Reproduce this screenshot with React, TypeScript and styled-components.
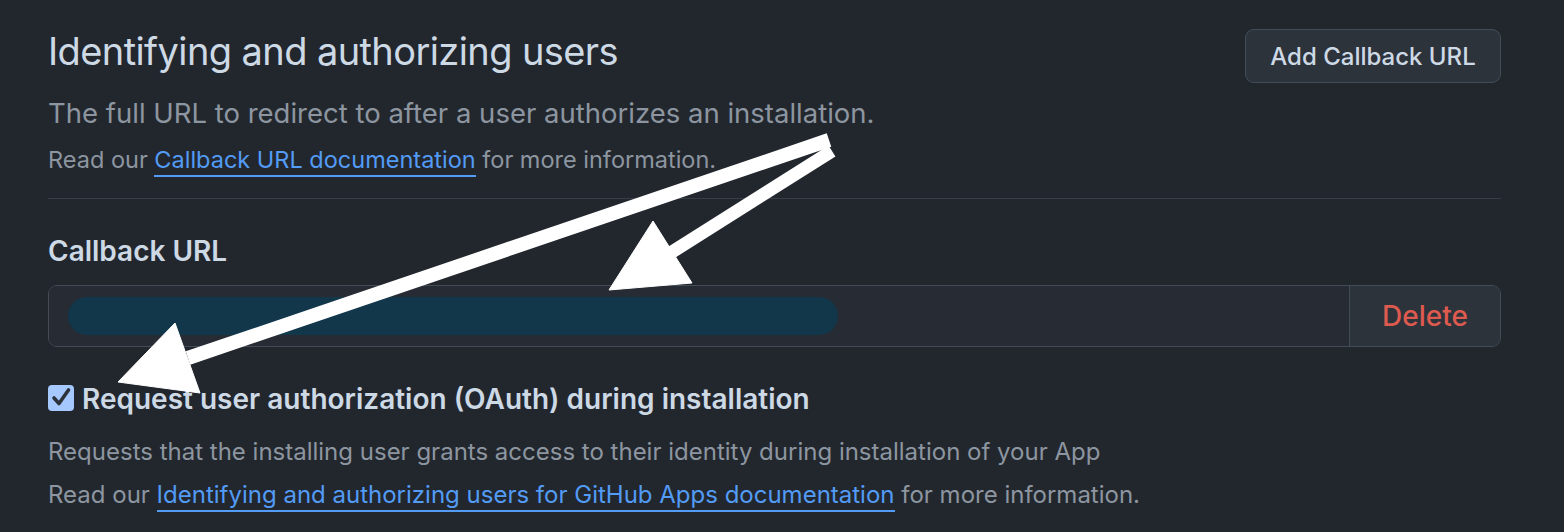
import styled, { createGlobalStyle } from 'styled-components';

const GlobalStyle = createGlobalStyle`
  html, body {
    margin: 0;
    padding: 0;
    background: #22272e;
  }
  body {
    font-family: Inter, "Noto Sans", "Liberation Sans", sans-serif;
    color: #adbac7;
  }
`;

const Page = styled.div`
  position: relative;
  width: 1564px;
  height: 532px;
  overflow: hidden;
  box-sizing: border-box;
  padding: 27px 63px 0 48px;
`;

const Header = styled.div`
  display: flex;
  flex-direction: column;
  padding-bottom: 23.5px;
  border-bottom: 1px solid #373e47;
`;

const TitleRow = styled.div`
  display: flex;
  justify-content: space-between;
  align-items: flex-start;
`;

const Title = styled.h2`
  margin: 0;
  font-size: 38px;
  line-height: 48px;
  font-weight: 400;
  color: #cdd9e5;
  letter-spacing: -0.6px;
`;

const OutlineButton = styled.button`
  margin-top: 2px;
  height: 54px;
  width: 256px;
  border: 1.5px solid #444c56;
  border-radius: 9px;
  background: #2d333b;
  color: #cdd9e5;
  font-family: inherit;
  font-size: 24px;
  font-weight: 500;
`;

const Lead = styled.p<{ $size: number; $lh: number; $top: number }>`
  margin: ${(p) => p.$top}px 0 0;
  font-size: ${(p) => p.$size}px;
  line-height: ${(p) => p.$lh}px;
  color: #8d96a0;
`;

const DocLink = styled.a`
  color: #539bf5;
  text-decoration: none;
  border-bottom: 2px solid #539bf5;
  padding-bottom: 1px;
`;

const Section = styled.div`
  display: flex;
  flex-direction: column;
  padding-top: 35px;
`;

const FieldLabel = styled.label`
  font-size: 28px;
  line-height: 34px;
  font-weight: 600;
  color: #cdd9e5;
`;

const InputGroup = styled.div`
  margin-top: 17px;
  display: flex;
  height: 62px;
  box-sizing: border-box;
  border: 1.5px solid #444c56;
  border-radius: 9px;
  overflow: hidden;
`;

const InputField = styled.div`
  flex: 1;
  display: flex;
  align-items: center;
  padding-left: 19px;
  background: #272b33;
`;

const RedactedValue = styled.div`
  width: 770px;
  height: 38px;
  border-radius: 19px;
  background: #12364a;
`;

const DangerButton = styled.button`
  width: 151px;
  border: 0;
  border-left: 1.5px solid #444c56;
  background: #2d333b;
  color: #dd5a4f;
  font-family: inherit;
  font-size: 28px;
  font-weight: 500;
`;

const CheckRow = styled.div`
  margin-top: 35px;
  display: flex;
  align-items: flex-start;
  gap: 8px;
`;

const CheckBox = styled.span`
  margin-top: 3px;
  width: 26px;
  height: 26px;
  border-radius: 4px;
  background: #a5c8ff;
  display: flex;
`;

const CheckLabel = styled.span`
  font-size: 28px;
  line-height: 34px;
  font-weight: 600;
  color: #cdd9e5;
`;

const Note = styled.p<{ $top: number }>`
  margin: ${(p) => p.$top}px 0 0;
  font-size: 24px;
  line-height: 30px;
  color: #8d96a0;
`;

const Overlay = styled.svg`
  position: absolute;
  left: 0;
  top: 0;
  pointer-events: none;
`;

const Arrows = () => (
  <Overlay width="1564" height="532" viewBox="0 0 1564 532">
    <g fill="#ffffff" stroke="#ffffff">
      <line x1="829" y1="140" x2="188" y2="358" strokeWidth="14" />
      <polygon points="118,382 175,323 200,393" strokeWidth="1" />
      <line x1="832" y1="151" x2="672" y2="252" strokeWidth="13" />
      <polygon points="609,290 653,221 692,283" strokeWidth="1" />
    </g>
  </Overlay>
);

export default function App() {
  return (
    <>
      <GlobalStyle />
      <Page>
        <Header>
          <TitleRow>
            <Title>Identifying and authorizing users</Title>
            <OutlineButton type="button">Add Callback URL</OutlineButton>
          </TitleRow>
          <Lead $size={27.5} $lh={36} $top={12}>
            The full URL to redirect to after a user authorizes an installation.
          </Lead>
          <Lead $size={23.5} $lh={30} $top={13.5}>
            Read our <DocLink href="#">Callback URL documentation</DocLink> for more information.
          </Lead>
        </Header>
        <Section>
          <FieldLabel>Callback URL</FieldLabel>
          <InputGroup>
            <InputField>
              <RedactedValue />
            </InputField>
            <DangerButton type="button">Delete</DangerButton>
          </InputGroup>
          <CheckRow>
            <CheckBox>
              <svg width="26" height="26" viewBox="0 0 26 26">
                <polyline
                  points="6,13 11,18.5 20.5,5"
                  fill="none"
                  stroke="#2d333b"
                  strokeWidth="3.6"
                  strokeLinecap="round"
                  strokeLinejoin="round"
                />
              </svg>
            </CheckBox>
            <CheckLabel>Request user authorization (OAuth) during installation</CheckLabel>
          </CheckRow>
          <Note $top={21}>
            Requests that the installing user grants access to their identity during installation of your App
          </Note>
          <Note $top={13}>
            Read our{' '}
            <DocLink href="#">Identifying and authorizing users for GitHub Apps documentation</DocLink> for more
            information.
          </Note>
        </Section>
        <Arrows />
      </Page>
    </>
  );
}
